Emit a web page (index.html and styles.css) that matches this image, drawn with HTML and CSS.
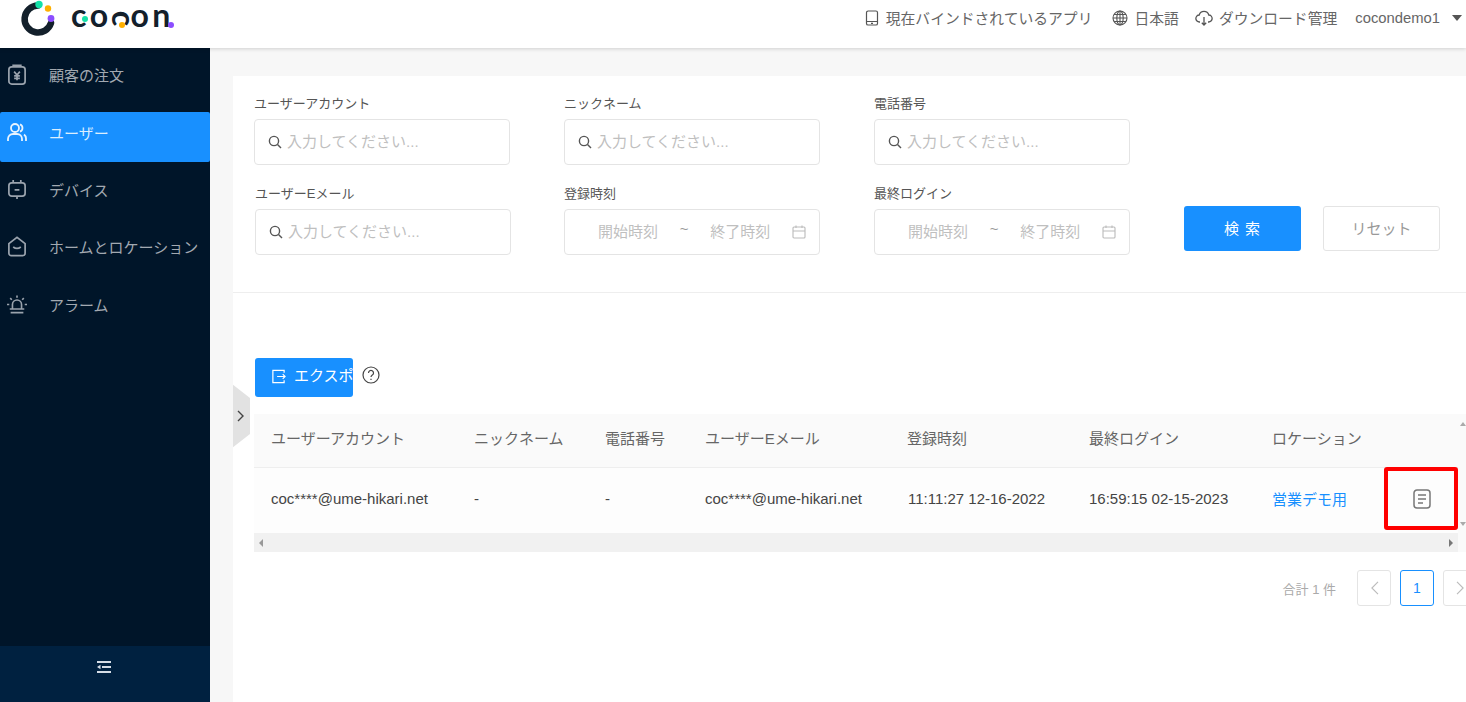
FILE: index.html
```html
<!DOCTYPE html>
<html lang="ja">
<head>
    <meta charset="UTF-8">
    <title>cocon</title>
    <link rel="stylesheet" href="styles.css">
</head>
<body>
    <div class="header">
        <div class="logo">
            <svg class="logo-mark" viewBox="0 0 40 40" fill="none">
                <path d="M20 5.500A13.500 13.500 0 1 0 33 23" stroke="#13202b" stroke-width="6.500" stroke-linecap="round"/>
                <circle cx="21" cy="4.500" r="3.700" fill="#14e0a8"/>
                <circle cx="30" cy="8.500" r="3.200" fill="#ffb000"/>
                <circle cx="33" cy="18.500" r="3.400" fill="#8c4dff"/>
            </svg>
            <div class="wordmark">
                co<span class="letter-turned">c</span>on
                <span class="dot dot-green"></span>
                <span class="dot dot-yellow"></span>
                <span class="dot dot-purple"></span>
            </div>
        </div>
        <div class="header-right">
            <div class="header-item header-item-app">
                <svg class="header-icon" viewBox="0 0 16 16" fill="none" stroke="#555" stroke-width="1.200"><rect x="2.500" y="1" width="11" height="14" rx="1.600"/><path d="M2.500 11.500h11M7 13.300h2"/></svg>
                <span>現在バインドされているアプリ</span>
            </div>
            <div class="header-item header-item-lang">
                <svg class="header-icon" viewBox="0 0 16 16" fill="none" stroke="#555" stroke-width="1.100"><circle cx="8" cy="8" r="7"/><ellipse cx="8" cy="8" rx="3.200" ry="7"/><path d="M1 8h14M2 4.500h12M2 11.500h12M8 1v14"/></svg>
                <span>日本語</span>
            </div>
            <div class="header-item">
                <svg class="header-icon header-icon-wide" viewBox="0 0 18 16" fill="none" stroke="#555" stroke-width="1.300"><path d="M5 12H4.500A3.500 3.500 0 0 1 4.200 5 5 5 0 0 1 13.800 5 3.500 3.500 0 0 1 13.500 12H13"/><path d="M9 7v8M6.800 12.800L9 15l2.200-2.200"/></svg>
                <span>ダウンロード管理</span>
            </div>
            <div class="header-item">
                <span>cocondemo1</span>
                <span class="caret"></span>
            </div>
        </div>
    </div>

    <div class="layout">
        <div class="sidebar">
            <div class="menu">
                <div class="menu-item menu-orders">
                    <svg class="menu-icon" viewBox="0 0 20 22" fill="none" stroke="#9aa3ad" stroke-width="1.800"><rect x="1.500" y="3" width="17" height="18" rx="3"/><path d="M6 3V1.500h8V3M7 8l3 3.500L13 8M10 11.500V17M7 12.500h6M7 15h6"/></svg>
                    <span>顧客の注文</span>
                </div>
                <div class="menu-item active">
                    <svg class="menu-icon" viewBox="0 0 20 20" fill="none" stroke="#e6f3ff" stroke-width="1.800"><circle cx="8" cy="5.500" r="4"/><path d="M1 18.500v-2a5 5 0 0 1 5-5h4a5 5 0 0 1 5 5v2M13 1.800a4 4 0 0 1 0 7.400M17 12a5 5 0 0 1 2 4.500v2"/></svg>
                    <span>ユーザー</span>
                </div>
                <div class="menu-item">
                    <svg class="menu-icon" viewBox="0 0 20 22" fill="none" stroke="#9aa3ad" stroke-width="1.800"><rect x="1.500" y="4" width="17" height="14" rx="3"/><path d="M6 1v3M14 1v3M10 18v3M7.500 11.500h5"/></svg>
                    <span>デバイス</span>
                </div>
                <div class="menu-item">
                    <svg class="menu-icon" viewBox="0 0 20 22" fill="none" stroke="#9aa3ad" stroke-width="1.800"><path d="M1.500 8L10 1.500 18.500 8v10a2.500 2.500 0 0 1-2.500 2.500H4A2.500 2.500 0 0 1 1.500 18z"/><path d="M6 11.500q4 3 8 0"/></svg>
                    <span>ホームとロケーション</span>
                </div>
                <div class="menu-item">
                    <svg class="menu-icon" viewBox="0 0 22 22" fill="none" stroke="#9aa3ad" stroke-width="1.800"><path d="M6 16v-5a5 5 0 0 1 10 0v5M3 16h16M4 20h14M11 1v2.500M3.500 4l1.800 1.800M18.500 4l-1.800 1.800M0 11h2.500M19.500 11H22"/></svg>
                    <span>アラーム</span>
                </div>
            </div>
            <div class="sidebar-footer">
                <svg class="fold-icon" viewBox="0 0 14 14" fill="#d5dde6"><path d="M0 1h14v2H0zM5 6h9v2H5zM0 11h14v2H0zM0 7l3.500-2.200v4.400z"/></svg>
            </div>
        </div>

        <div class="main">
            <div class="panel">
                <div class="filters">
                    <div class="field">
                        <label>ユーザーアカウント</label>
                        <div class="input"><svg class="search-icon" viewBox="0 0 14 14" fill="none" stroke="#555" stroke-width="1.400"><circle cx="6" cy="6" r="4.600"/><path d="M9.500 9.500L13 13"/></svg>入力してください...</div>
                    </div>
                    <div class="field">
                        <label>ニックネーム</label>
                        <div class="input"><svg class="search-icon" viewBox="0 0 14 14" fill="none" stroke="#555" stroke-width="1.400"><circle cx="6" cy="6" r="4.600"/><path d="M9.500 9.500L13 13"/></svg>入力してください...</div>
                    </div>
                    <div class="field">
                        <label>電話番号</label>
                        <div class="input"><svg class="search-icon" viewBox="0 0 14 14" fill="none" stroke="#555" stroke-width="1.400"><circle cx="6" cy="6" r="4.600"/><path d="M9.500 9.500L13 13"/></svg>入力してください...</div>
                    </div>
                    <div></div>
                    <div class="field field-shift">
                        <label>ユーザーEメール</label>
                        <div class="input"><svg class="search-icon" viewBox="0 0 14 14" fill="none" stroke="#555" stroke-width="1.400"><circle cx="6" cy="6" r="4.600"/><path d="M9.500 9.500L13 13"/></svg>入力してください...</div>
                    </div>
                    <div class="field">
                        <label>登録時刻</label>
                        <div class="input date-input">
                            <span>開始時刻</span><span class="tilde">~</span><span>終了時刻</span>
                            <svg class="calendar-icon" viewBox="0 0 14 14" fill="none" stroke="#bbb" stroke-width="1.100"><rect x="1" y="2" width="12" height="11" rx="1"/><path d="M1 6h12M4 .500V3M10 .500V3"/></svg>
                        </div>
                    </div>
                    <div class="field">
                        <label>最終ログイン</label>
                        <div class="input date-input">
                            <span>開始時刻</span><span class="tilde">~</span><span>終了時刻</span>
                            <svg class="calendar-icon" viewBox="0 0 14 14" fill="none" stroke="#bbb" stroke-width="1.100"><rect x="1" y="2" width="12" height="11" rx="1"/><path d="M1 6h12M4 .500V3M10 .500V3"/></svg>
                        </div>
                    </div>
                    <div class="filter-actions">
                        <button class="btn btn-primary">検 索</button>
                        <button class="btn btn-default">リセット</button>
                    </div>
                </div>

                <div class="toolbar">
                    <button class="btn-export">
                        <svg class="export-icon" viewBox="0 0 16 16" fill="none" stroke="#fff" stroke-width="1.300"><path d="M14 4V1.500H2v13h12V12M6.500 8H15M12.500 5.500L15 8l-2.500 2.500"/></svg>
                        <span class="export-label">エクスポート</span>
                    </button>
                    <svg class="help-icon" viewBox="0 0 18 18" fill="none" stroke="#444" stroke-width="1.200"><circle cx="9" cy="9" r="8"/><path d="M6.500 7a2.500 2.500 0 1 1 3.800 2.100c-.9.600-1.300 1-1.300 2"/><path d="M9 12.800v1.200"/></svg>
                </div>

                <div class="table-wrap">
                    <table class="user-table">
                        <thead>
                            <tr>
                                <th class="col-account">ユーザーアカウント</th>
                                <th class="col-nick">ニックネーム</th>
                                <th class="col-phone">電話番号</th>
                                <th class="col-email">ユーザーEメール</th>
                                <th class="col-created">登録時刻</th>
                                <th class="col-login">最終ログイン</th>
                                <th class="col-location">ロケーション</th>
                                <th></th>
                            </tr>
                        </thead>
                        <tbody>
                            <tr>
                                <td>coc****@ume-hikari.net</td>
                                <td>-</td>
                                <td>-</td>
                                <td>coc****@ume-hikari.net</td>
                                <td>11:11:27 12-16-2022</td>
                                <td>16:59:15 02-15-2023</td>
                                <td class="location-link">営業デモ用</td>
                                <td class="detail-cell">
                                    <svg class="detail-icon" viewBox="0 0 18 20" fill="none" stroke="#777" stroke-width="1.500"><path d="M4 1h10a3 3 0 0 1 3 3v12a3 3 0 0 1-3 3H4a3 3 0 0 1-3-3V4a3 3 0 0 1 3-3z"/><path d="M5 6h8M5 10h8M5 14h5"/></svg>
                                </td>
                            </tr>
                        </tbody>
                    </table>
                    <div class="h-scroll">
                        <span class="arrow-left"></span>
                        <span class="arrow-right"></span>
                    </div>
                    <div class="v-scroll">
                        <span class="arrow-up"></span>
                        <span class="arrow-down"></span>
                    </div>
                    <div class="highlight"></div>
                </div>

                <div class="pager">
                    <span class="pager-total">合計 1 件</span>
                    <span class="page-btn"><svg class="page-arrow" viewBox="0 0 10 16" fill="none" stroke="#bbb" stroke-width="1.300"><path d="M9 1L2 8l7 7"/></svg></span>
                    <span class="page-btn page-current">1</span>
                    <span class="page-btn"><svg class="page-arrow" viewBox="0 0 10 16" fill="none" stroke="#bbb" stroke-width="1.300"><path d="M1 1l7 7-7 7"/></svg></span>
                </div>

                <div class="collapse-tab">
                    <svg class="collapse-icon" viewBox="0 0 8 12" fill="none" stroke="#444" stroke-width="1.400"><path d="M1 1l5 5-5 5"/></svg>
                </div>
            </div>
        </div>
    </div>
</body>
</html>
```

FILE: styles.css
```css
:root {
    --primary: #1890ff;
    --navy: #001529;
    --border: #e4e4e4;
    --muted: #bfbfbf;
    --text: #555;
}

* {
    box-sizing: border-box;
}

html, body {
    height: 100%;
}

body {
    margin: 0;
    overflow: hidden;
    display: flex;
    flex-direction: column;
    font-family: "Liberation Sans", "Noto Sans CJK JP", sans-serif;
    font-size: 15px;
    color: var(--text);
    background: #f7f7f7;
}

/* header */
.header {
    position: relative;
    z-index: 2;
    flex: none;
    height: 48px;
    display: flex;
    justify-content: space-between;
    padding: 0 4px 13px 18px;
    background: white;
    box-shadow: 0 1px 4px rgba(0,0,0,0.16);
}

.logo {
    display: flex;
    align-items: flex-start;
    gap: 13px;
}

.logo-mark {
    width: 40px;
    height: 40px;
}

.wordmark {
    position: relative;
    font-family: "Lato", sans-serif;
    font-size: 32px;
    font-weight: 700;
    line-height: 30px;
    letter-spacing: 3.500px;
    color: #13202b;
}

.letter-turned {
    display: inline-block;
    transform: rotate(90deg);
    transform-origin: 44% 19px;
}

.dot {
    position: absolute;
    width: 6px;
    height: 6px;
    border-radius: 50%;
}

.dot-green { left: 11px; top: 16px; background: #14e0a8; }
.dot-yellow { left: 48px; top: 22px; background: #ffb000; }
.dot-purple { left: 97px; top: 22px; background: #8c4dff; }

.header-right {
    display: flex;
    align-items: center;
    gap: 18px;
    font-size: 14.800px;
    color: #666;
}

.header-item {
    display: flex;
    align-items: center;
    gap: 6px;
}

.header-item-app {
    margin-right: 2px;
}

.header-item-lang {
    margin-right: -2px;
}

.header-icon {
    width: 16px;
    height: 16px;
}

.header-icon-wide {
    width: 18px;
}

.caret {
    margin-left: 6px;
    border-left: 5px solid transparent;
    border-right: 5px solid transparent;
    border-top: 6px solid #555;
}

/* sidebar */
.layout {
    flex: 1;
    display: flex;
    min-height: 0;
}

.sidebar {
    flex: none;
    width: 210px;
    display: flex;
    flex-direction: column;
    justify-content: space-between;
    background: var(--navy);
}

.menu {
    display: flex;
    flex-direction: column;
    gap: 7.500px;
    padding-top: 2px;
}

.menu-item {
    height: 50px;
    display: flex;
    align-items: center;
    gap: 22px;
    padding-left: 7px;
    padding-bottom: 2px;
    color: #a2a9b1;
}

.menu-orders {
    margin-bottom: 4.500px;
}

.menu-item.active {
    margin-bottom: -4.500px;
    padding-bottom: 10px;
    background: var(--primary);
    color: #dbeeff;
    border-radius: 2px;
}

.menu-icon {
    flex: none;
    width: 20px;
    height: 21px;
}

.sidebar-footer {
    height: 56px;
    display: flex;
    align-items: center;
    justify-content: center;
    padding-bottom: 14px;
    padding-right: 2px;
    background: #002140;
}

.fold-icon {
    width: 14px;
    height: 14px;
}

/* main */
.main {
    flex: 1;
    min-width: 0;
    padding: 28px 0 0 23px;
}

.panel {
    position: relative;
    height: 100%;
    overflow: hidden;
    background: white;
}

.filters {
    display: grid;
    grid-template-columns: 256px 256px 256px 1fr;
    column-gap: 54px;
    row-gap: 18px;
    height: 217px;
    padding: 17px 0 0 21px;
    align-content: start;
    border-bottom: 1px solid #eee;
}

.field label {
    display: block;
    height: 20px;
    margin-bottom: 6px;
    font-size: 13px;
    line-height: 21px;
    color: var(--text);
}

.field-shift {
    margin-left: 1px;
    margin-right: -1px;
}

.input {
    height: 46px;
    display: flex;
    align-items: center;
    padding-left: 13px;
    padding-bottom: 3px;
    border: 1px solid var(--border);
    border-radius: 4px;
    color: var(--muted);
}

.search-icon {
    flex: none;
    width: 14px;
    height: 14px;
    margin-top: 3px;
    margin-right: 5px;
}

.date-input {
    padding-left: 33px;
    padding-right: 13px;
    justify-content: space-between;
}

.tilde {
    margin-top: -4px;
    color: #999;
}

.calendar-icon {
    width: 14px;
    height: 14px;
    margin-top: 3px;
}

.filter-actions {
    display: flex;
    align-items: flex-start;
    gap: 22px;
    padding-top: 23px;
}

.btn {
    width: 117px;
    height: 45px;
    padding: 0 0 2px;
    border-radius: 3px;
    font-family: inherit;
    font-size: 15px;
}

.btn-primary {
    border: none;
    background: var(--primary);
    color: white;
    letter-spacing: 1px;
}

.btn-default {
    border: 1px solid var(--border);
    background: white;
    color: #999;
}

/* toolbar */
.toolbar {
    display: flex;
    align-items: center;
    gap: 9px;
    margin: 65px 0 17px 22px;
}

.btn-export {
    width: 98px;
    height: 39px;
    display: flex;
    align-items: center;
    gap: 8px;
    padding: 0 0 6px 16px;
    overflow: hidden;
    white-space: nowrap;
    border: none;
    border-radius: 3px;
    background: var(--primary);
    color: white;
    font-family: inherit;
    font-size: 15px;
}

.export-icon {
    flex: none;
    width: 15px;
    height: 15px;
    margin-top: 4px;
}

.help-icon {
    width: 18px;
    height: 18px;
    margin-bottom: 6px;
}

/* table */
.table-wrap {
    position: relative;
    margin-left: 21px;
}

.user-table {
    width: 1204px;
    table-layout: fixed;
    border-collapse: collapse;
}

.user-table th {
    height: 53px;
    padding: 0 0 5px 17px;
    background: #fafafa;
    border-bottom: 1px solid #eee;
    font-weight: normal;
    text-align: left;
    white-space: nowrap;
    color: #666;
}

.user-table td {
    height: 66px;
    padding: 0 0 4px 17px;
    background: #fdfdfd;
    white-space: nowrap;
    color: #444;
}

.col-account { width: 203px; }
.col-nick { width: 131px; }
.col-phone { width: 100px; }
.col-email { width: 203px; }
.col-created { width: 181px; }
.col-login { width: 184px; }
.col-location { width: 120px; }

.user-table .col-created,
.user-table .col-location,
.user-table .location-link {
    padding-left: 16px;
}

.user-table .location-link {
    color: var(--primary);
}

.user-table .detail-cell {
    padding-left: 0;
}

.detail-icon {
    display: block;
    width: 18px;
    height: 20px;
    margin: 2px 0 0 37px;
}

.h-scroll {
    width: 1204px;
    height: 19px;
    display: flex;
    align-items: center;
    justify-content: space-between;
    padding: 0 5px;
    background: #f1f1f1;
}

.arrow-left {
    border-top: 4px solid transparent;
    border-bottom: 4px solid transparent;
    border-right: 4px solid #999;
}

.arrow-right {
    border-top: 4px solid transparent;
    border-bottom: 4px solid transparent;
    border-left: 4px solid #777;
}

.v-scroll {
    position: absolute;
    top: 0;
    left: 1204px;
    width: 9px;
    height: 138px;
    display: flex;
    flex-direction: column;
    justify-content: space-between;
    align-items: center;
    padding: 8px 0 26px;
    background: #fafafa;
}

.arrow-up {
    border-left: 3px solid transparent;
    border-right: 3px solid transparent;
    border-bottom: 4px solid #aaa;
}

.arrow-down {
    border-left: 3px solid transparent;
    border-right: 3px solid transparent;
    border-top: 4px solid #aaa;
}

.highlight {
    position: absolute;
    left: 1130px;
    top: 53px;
    width: 74px;
    height: 63px;
    border: 4px solid #f00;
    border-radius: 3px;
}

/* pager */
.pager {
    display: flex;
    align-items: center;
    justify-content: flex-end;
    gap: 9px;
    margin: 18px -11px 0 0;
}

.pager-total {
    margin-right: 12px;
    font-size: 13px;
    color: #aaa;
}

.page-btn {
    width: 34px;
    height: 36px;
    display: flex;
    align-items: center;
    justify-content: center;
    border: 1px solid var(--border);
    border-radius: 3px;
    background: white;
    font-size: 14px;
}

.page-arrow {
    width: 9px;
    height: 14px;
}

.page-current {
    border-color: var(--primary);
    color: var(--primary);
}

.collapse-tab {
    position: absolute;
    left: -1px;
    top: 308px;
    width: 18px;
    height: 64px;
    display: flex;
    align-items: center;
    justify-content: center;
    padding-bottom: 1px;
    background: #e2e2e2;
    clip-path: polygon(0 0, 100% 22%, 100% 78%, 0 100%);
}

.collapse-icon {
    width: 8px;
    height: 12px;
}
```
